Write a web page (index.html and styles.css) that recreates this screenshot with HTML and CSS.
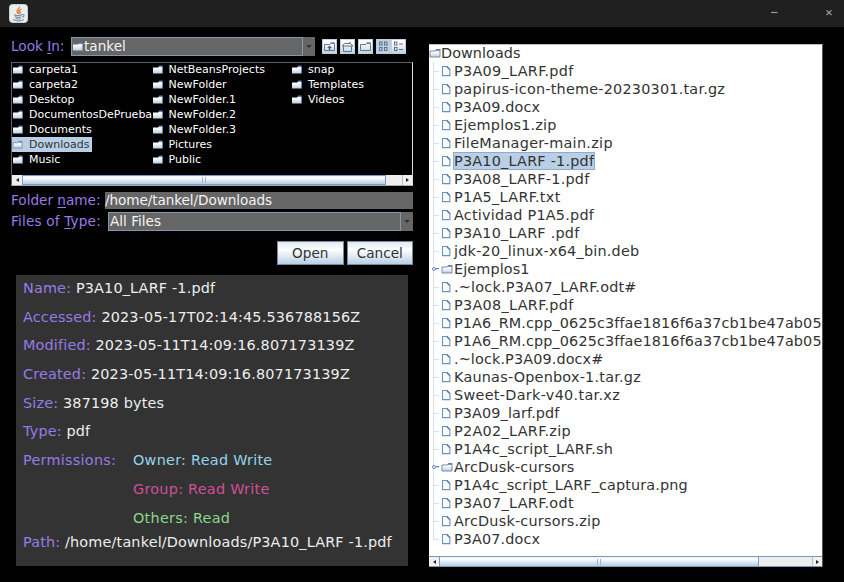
FILE: index.html
```html
<!DOCTYPE html>
<html lang="en">
<head>
<meta charset="utf-8">
<title>File manager</title>
<link rel="stylesheet" href="styles.css">
</head>
<body>
<svg class="defs" aria-hidden="true">
  <defs>
    <linearGradient id="fill" x1="0" y1="0" x2="0" y2="1"><stop offset="0" stop-color="#fff"/><stop offset=".35" stop-color="#f4f8fc"/><stop offset="1" stop-color="#b8cfe5"/></linearGradient>
    <symbol id="dir" viewBox="0 0 10 9"><path d="M0 2.5H5L6 1.8H9.500V8.500H0Z" fill="url(#fill)"/><path d="M5.500 1.500L6.500.5H9.500V2H5.500Z" fill="#6382bf"/><path d="M9.300 2V8.500" stroke="#8ba0b8" stroke-width=".6"/></symbol>
    <symbol id="dir2" viewBox="0 0 12 10"><path d="M1 3H6L7 2.300H11V9H1Z" fill="url(#fill)" stroke="#7b8da0"/><path d="M6.500 2L7.500 1H11.500V2.500H6.500Z" fill="#6382bf"/></symbol>
    <symbol id="doc" viewBox="0 0 10 12"><path d="M1.500 1.500H5.800L8.900 4.700V10.600H1.500Z" fill="#fbfdff" stroke="#6b93bd" stroke-width="1.100"/><path d="M5.700 1.300L9 4.800" stroke="#557fae" stroke-width="1.400"/></symbol>
  </defs>
</svg>
<header class="titlebar">
  <svg class="java" viewBox="0 0 19 19"><rect x=".5" y=".5" width="18" height="18" rx="3" fill="#e9eef1" stroke="#cbd2d6"/><path d="M10.500 2.500C11 5 7 5.500 8 8L9.500 10C9 8 9.500 7 10.500 6M12.500 5C10 6.500 10 7.500 11.500 8.500L10.500 10" fill="none" stroke="#ef7b3e" stroke-width="1.300"/><path d="M5 10.500C7 12 11 12 13 10.500M6 12.500C8 13.700 10.500 13.600 12 12.600M6.500 14.300C8 15.200 10.500 15 12 14.300M13 10.500C16 10 15.500 12.500 13 13.300M4 15.500C7 17.300 12 17.300 15 15.500" fill="none" stroke="#7893a8" stroke-width="1.100"/></svg>
  <svg class="winbtns" viewBox="0 0 66 14"><path d="M2 7.500H8.500" stroke="#9a9a9a" stroke-width="1.200"/><path d="M57.500 5.300L62.500 10M62.500 5.300L57.500 10" stroke="#949494" stroke-width="1.200"/></svg>
</header>
<main class="body">
  <div class="left">
    <div class="lookin">
      <span class="lbl">Look <u>I</u>n:</span>
      <div class="combo"><div class="combo-value"><svg class="dir"><use href="#dir"/></svg>tankel</div><span class="arrow"></span></div>
      <div class="tools">
        <svg viewBox="0 0 15 15"><rect x=".5" y=".5" width="14" height="14" fill="url(#fill)" stroke="#c5cfda"/><path d="M2.500 5.500H8L9 4.500H12.500V11.500H2.500Z" fill="none" stroke="#687886"/><path d="M8.500 4H12.500" stroke="#6382bf" stroke-width="1.500"/><path d="M7.500 6.500L5 9H6.700V11H8.300V9H10Z" fill="#506479"/></svg>
        <svg viewBox="0 0 15 15"><rect x=".5" y=".5" width="14" height="14" fill="url(#fill)" stroke="#c5cfda"/><path d="M3.500 7V12.500H11.500V7M2 7L4.500 4.500H10.500L13 7Z" fill="none" stroke="#657582"/><path d="M10 3V4" stroke="#6382bf" stroke-width="1.500"/></svg>
        <svg viewBox="0 0 15 15"><rect x=".5" y=".5" width="14" height="14" fill="url(#fill)" stroke="#c5cfda"/><path d="M2.500 5.500H8L9 4.500H12.500V11.500H2.500Z" fill="none" stroke="#687886"/><path d="M8.500 4H12.500" stroke="#6382bf" stroke-width="1.500"/></svg>
        <svg class="views" viewBox="0 0 30 15"><rect width="15" height="15" fill="#b8cfe5"/><rect x="15.500" y=".5" width="14" height="14" fill="url(#fill)" stroke="#c5cfda"/><g fill="none" stroke="#66727e"><rect x="3.500" y="3" width="2.500" height="3"/><rect x="8.500" y="3" width="2.500" height="3"/><rect x="3.500" y="8.500" width="2.500" height="3"/><rect x="8.500" y="8.500" width="2.500" height="3"/><rect x="18.500" y="3" width="2.500" height="3"/><rect x="18.500" y="8.500" width="2.500" height="3"/><path d="M23 5H27M23 10.500H27"/></g></svg>
      </div>
    </div>
    <div class="listbox">
      <div class="files">
        <div class="file"><svg class="dir"><use href="#dir"/></svg>carpeta1</div>
        <div class="file"><svg class="dir"><use href="#dir"/></svg>carpeta2</div>
        <div class="file"><svg class="dir"><use href="#dir"/></svg>Desktop</div>
        <div class="file"><svg class="dir"><use href="#dir"/></svg>DocumentosDePrueba</div>
        <div class="file"><svg class="dir"><use href="#dir"/></svg>Documents</div>
        <div class="file chosen"><svg class="dir"><use href="#dir2"/></svg>Downloads</div>
        <div class="file"><svg class="dir"><use href="#dir"/></svg>Music</div>
        <div class="file"><svg class="dir"><use href="#dir"/></svg>NetBeansProjects</div>
        <div class="file"><svg class="dir"><use href="#dir"/></svg>NewFolder</div>
        <div class="file"><svg class="dir"><use href="#dir"/></svg>NewFolder.1</div>
        <div class="file"><svg class="dir"><use href="#dir"/></svg>NewFolder.2</div>
        <div class="file"><svg class="dir"><use href="#dir"/></svg>NewFolder.3</div>
        <div class="file"><svg class="dir"><use href="#dir"/></svg>Pictures</div>
        <div class="file"><svg class="dir"><use href="#dir"/></svg>Public</div>
        <div class="file"><svg class="dir"><use href="#dir"/></svg>snap</div>
        <div class="file"><svg class="dir"><use href="#dir"/></svg>Templates</div>
        <div class="file"><svg class="dir"><use href="#dir"/></svg>Videos</div>
      </div>
      <div class="scroll"><span class="sbtn prev"></span><span class="thumb"></span><span class="sbtn next"></span></div>
    </div>
    <div class="field name"><span class="lbl">Folder <u>n</u>ame:</span><div class="input">/home/tankel/Downloads</div></div>
    <div class="field type"><span class="lbl">Files of <u>T</u>ype:</span><div class="combo"><div class="combo-value">All Files</div><span class="arrow"></span></div></div>
    <div class="actions"><button>Open</button><button>Cancel</button></div>
    <section class="info">
      <p><b>Name:</b> P3A10_LARF -1.pdf</p>
      <p><b>Accessed:</b> 2023-05-17T02:14:45.536788156Z</p>
      <p><b>Modified:</b> 2023-05-11T14:09:16.807173139Z</p>
      <p><b>Created:</b> 2023-05-11T14:09:16.807173139Z</p>
      <p><b>Size:</b> 387198 bytes</p>
      <p><b>Type:</b> pdf</p>
      <div class="perms"><b>Permissions:</b><div><p class="owner">Owner: Read Write</p><p class="group">Group: Read Write</p><p class="others">Others: Read</p></div></div>
      <p class="path"><b>Path:</b> /home/tankel/Downloads/P3A10_LARF -1.pdf</p>
    </section>
  </div>
  <div class="treebox">
    <div class="tree">
      <div class="root"><svg class="tdir"><use href="#dir2"/></svg>Downloads</div>
      <ul>
        <li class="wide"><svg class="doc"><use href="#doc"/></svg><span>P3A09_LARF.pdf</span></li>
        <li><svg class="doc"><use href="#doc"/></svg><span>papirus-icon-theme-20230301.tar.gz</span></li>
        <li class="tight"><svg class="doc"><use href="#doc"/></svg><span>P3A09.docx</span></li>
        <li><svg class="doc"><use href="#doc"/></svg><span>Ejemplos1.zip</span></li>
        <li class="wide"><svg class="doc"><use href="#doc"/></svg><span>FileManager-main.zip</span></li>
        <li><svg class="doc"><use href="#doc"/></svg><span class="sel">P3A10_LARF -1.pdf</span></li>
        <li><svg class="doc"><use href="#doc"/></svg><span>P3A08_LARF-1.pdf</span></li>
        <li class="wide"><svg class="doc"><use href="#doc"/></svg><span>P1A5_LARF.txt</span></li>
        <li><svg class="doc"><use href="#doc"/></svg><span>Actividad P1A5.pdf</span></li>
        <li><svg class="doc"><use href="#doc"/></svg><span>P3A10_LARF .pdf</span></li>
        <li><svg class="doc"><use href="#doc"/></svg><span>jdk-20_linux-x64_bin.deb</span></li>
        <li class="folder tight"><svg class="tdir"><use href="#dir2"/></svg><span>Ejemplos1</span></li>
        <li><svg class="doc"><use href="#doc"/></svg><span>.~lock.P3A07_LARF.odt#</span></li>
        <li class="wide"><svg class="doc"><use href="#doc"/></svg><span>P3A08_LARF.pdf</span></li>
        <li class="tight"><svg class="doc"><use href="#doc"/></svg><span>P1A6_RM.cpp_0625c3ffae1816f6a37cb1be47ab05</span></li>
        <li class="tight"><svg class="doc"><use href="#doc"/></svg><span>P1A6_RM.cpp_0625c3ffae1816f6a37cb1be47ab05</span></li>
        <li class="tight"><svg class="doc"><use href="#doc"/></svg><span>.~lock.P3A09.docx#</span></li>
        <li><svg class="doc"><use href="#doc"/></svg><span>Kaunas-Openbox-1.tar.gz</span></li>
        <li class="wide"><svg class="doc"><use href="#doc"/></svg><span>Sweet-Dark-v40.tar.xz</span></li>
        <li class="tight"><svg class="doc"><use href="#doc"/></svg><span>P3A09_larf.pdf</span></li>
        <li class="wide"><svg class="doc"><use href="#doc"/></svg><span>P2A02_LARF.zip</span></li>
        <li><svg class="doc"><use href="#doc"/></svg><span>P1A4c_script_LARF.sh</span></li>
        <li class="folder"><svg class="tdir"><use href="#dir2"/></svg><span>ArcDusk-cursors</span></li>
        <li class="tight"><svg class="doc"><use href="#doc"/></svg><span>P1A4c_script_LARF_captura.png</span></li>
        <li class="wide"><svg class="doc"><use href="#doc"/></svg><span>P3A07_LARF.odt</span></li>
        <li><svg class="doc"><use href="#doc"/></svg><span>ArcDusk-cursors.zip</span></li>
        <li class="tight"><svg class="doc"><use href="#doc"/></svg><span>P3A07.docx</span></li>
      </ul>
    </div>
    <div class="scroll"><span class="sbtn prev"></span><span class="thumb"></span><span class="sbtn next"></span></div>
  </div>
</main>
</body>
</html>
```
FILE: styles.css
```css
* { box-sizing: border-box; }
body { margin: 0; width: 844px; height: 582px; overflow: hidden; background: #000; color: #eee; font-family: "DejaVu Sans", sans-serif; font-size: 13.6px; white-space: nowrap; }
p, ul { margin: 0; padding: 0; }
b { font-weight: 400; }
svg { display: block; flex: none; }
.defs { position: absolute; width: 0; height: 0; }
.titlebar { height: 27px; background: #202020; display: flex; justify-content: space-between; padding: 4px 9px 0 9px; }
.java { width: 19px; height: 19px; }
.winbtns { width: 66px; height: 14px; margin: 1px 0 0 0; }
.body { display: flex; padding: 10px 0 0 11px; gap: 16px; }
.left { width: 402px; }
.lbl, .info b { color: #977be6; }
.lbl u { text-decoration-thickness: 1px; text-underline-offset: 2px; }
.lookin { display: flex; align-items: center; height: 18px; }
.lookin .lbl { width: 60px; }
.combo { display: flex; height: 19px; background: #666; color: #f4f4f4; }
.lookin .combo { width: 244px; }
.combo-value { flex: 1; display: flex; align-items: center; gap: 1px; border: 1px solid #8298ad; padding-left: 1px; }
.arrow { width: 12px; display: flex; align-items: center; justify-content: center; }
.arrow::before { content: ""; border: 3px solid transparent; border-top-color: #333; border-bottom: 0; }
.dir { width: 10px; height: 9px; }
.tools { display: flex; gap: 3px; margin-left: 7px; }
.tools svg { width: 15px; height: 15px; }
.tools .views { width: 30px; }
.listbox { margin-top: 7px; height: 124px; border: 1px solid #59636e; border-right-color: #ddd; border-bottom-color: #aaa; display: flex; flex-direction: column; }
.files { flex: 1; margin-top: -1px; display: grid; grid-auto-flow: column; grid-template-rows: repeat(7, 14.95px); grid-template-columns: 139.500px 139.500px 1fr; font-size: 11px; color: #fff; }
.file { display: flex; align-items: center; gap: 6px; padding-left: 1px; justify-self: start; }
.chosen { background: #b8cfe5; color: #333; padding: 0 3px 0 0; }
.chosen .dir { width: 11px; }
.scroll { display: flex; height: 10px; background: #eee; flex: none; }
.sbtn { width: 10px; display: flex; align-items: center; justify-content: center; background: #f0f0f0; }
.sbtn::before { content: ""; border: 2.500px solid transparent; }
.prev::before { border-right: 3px solid #222; border-left: 0; }
.next::before { border-left: 3px solid #222; border-right: 0; }
.next { margin-left: auto; border-left: 1px solid #b5c0cc; }
.thumb { width: 364px; border: 1px solid #7a9ccb; background: linear-gradient(#eaf2fa, #fff 25%, #c5d9ec 80%, #b8cfe5); display: flex; align-items: center; justify-content: center; }
.thumb::before { content: ""; width: 2px; height: 6px; border: 1px solid #9ab3d8; border-width: 0 1px; }
.field { display: flex; align-items: center; }
.name { margin-top: 6px; height: 17px; }
.name .lbl { width: 94px; line-height: 16px; margin-top: -1px; }
.input { flex: 1; height: 17px; line-height: 17px; background: #666; color: #f4f4f4; letter-spacing: -.08px; }
.type { margin-top: 3px; height: 19px; }
.type .lbl { width: 97px; letter-spacing: .18px; line-height: 16px; margin-top: -1px; }
.type .combo { flex: 1; }
.type .combo-value { padding: 0 0 2px 1px; }
.actions { display: flex; justify-content: flex-end; gap: 3px; margin-top: 10px; }
button { width: 66.500px; height: 24px; padding: 0; border: 1px solid #7a8a99; background: linear-gradient(#dfe9f3, #fff 35%, #b8cfe5); font: inherit; color: #333; }
.info { margin: 10px 0 0 5px; width: 392px; height: 291px; background: #333; padding: 0 7px; font-size: 14.4px; letter-spacing: .17px; color: #eee; }
.info p { height: 28.700px; line-height: 26px; }
.perms { display: flex; line-height: 26px; letter-spacing: .27px; }
.perms b { width: 110px; }
.owner { color: #93d5ee; }
.group { color: #cf5099; }
.others { color: #8bd78b; }
.info .path { margin-top: -4px; }
.treebox { width: 394px; height: 523px; margin-top: 7px; background: #fff; border-top: 1px solid #bbb; border-right: 1px solid #555; color: #333; font-size: 14.4px; letter-spacing: .22px; display: flex; flex-direction: column; }
.tree { flex: 1; overflow: hidden; margin-top: -1px; }
.root { display: flex; align-items: center; height: 18px; line-height: 18px; letter-spacing: .06px; }
.tight { letter-spacing: .12px; }
.wide { letter-spacing: .31px; }
.tdir { width: 12px; height: 10px; }
.tree ul { list-style: none; }
.tree li { display: flex; align-items: center; height: 18px; line-height: 18px; padding-left: 12px; background: linear-gradient(#d5e2ee, #d5e2ee) 4px 0 / 1px 100% no-repeat, linear-gradient(#d5e2ee, #d5e2ee) 4px 9px / 6px 1px no-repeat; }
.tree li:last-child { background-size: 1px 9px, 6px 1px; }
.doc { width: 10px; height: 12px; margin-right: 2px; }
.tree li span { height: 18px; padding: 0 1px; }
.tree .sel { background: #b8cfe5; outline: 1px solid #91a8d1; outline-offset: -1px; }
.folder { position: relative; }
.folder::before { content: ""; position: absolute; left: 3px; top: 7px; width: 2px; height: 2px; border: 1px solid #6382bf; border-radius: 50%; background: #fff; }
.folder::after { content: ""; position: absolute; left: 7px; top: 8px; width: 3px; height: 1px; background: #6382bf; }
.treebox .scroll { border: 1px solid #8197b0; border-width: 1px 0; height: 11px; }
.treebox .thumb { width: 320px; border-width: 0 1px; }
```
